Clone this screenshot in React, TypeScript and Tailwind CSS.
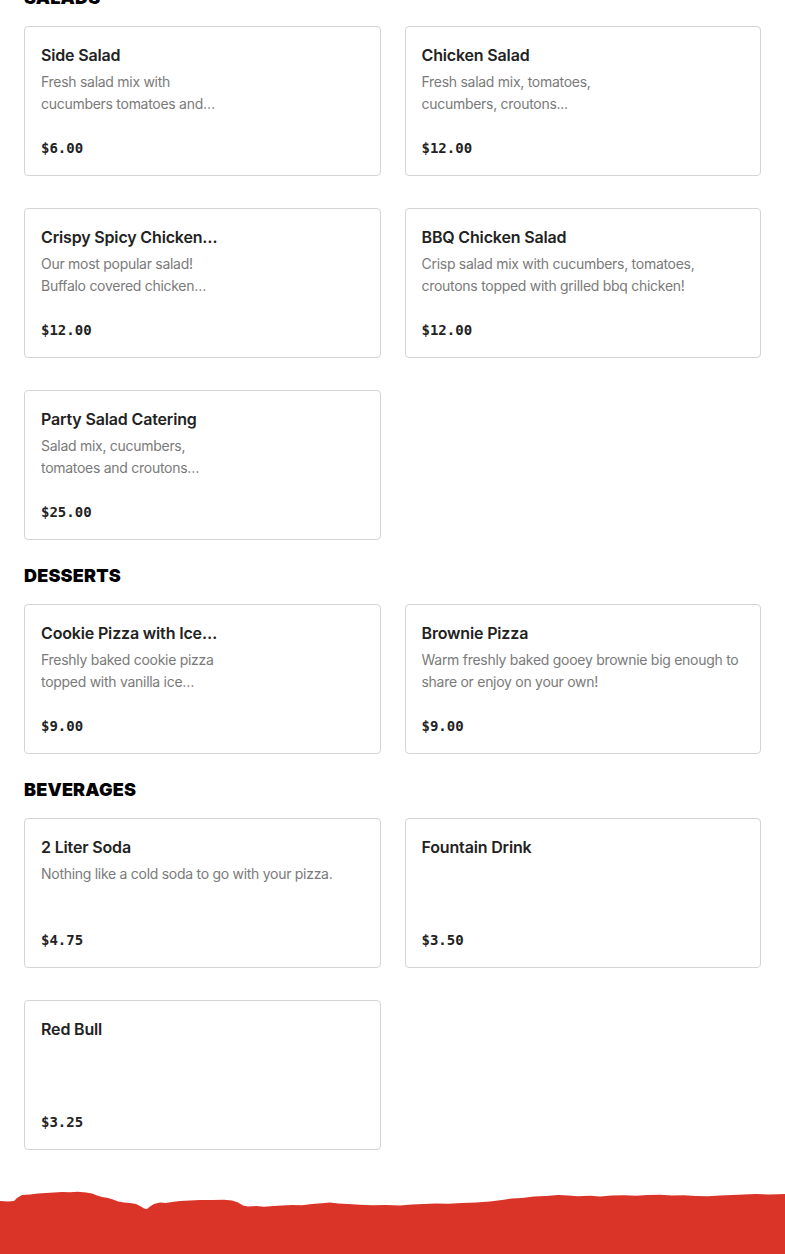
import React from 'react'

type Item = {
  name: string
  description?: string
  price: string
  hasImage?: boolean
}

type Section = {
  title: string
  items: Item[]
}

const MENU: Section[] = [
  {
    title: 'SALADS',
    items: [
      { name: 'Side Salad', description: 'Fresh salad mix with cucumbers tomatoes and croutons with your choice of dressing.', price: '$6.00', hasImage: true },
      { name: 'Chicken Salad', description: 'Fresh salad mix, tomatoes, cucumbers, croutons...', price: '$12.00', hasImage: true },
      { name: 'Crispy Spicy Chicken Salad', description: 'Our most popular salad! Buffalo covered chicken tenders on a bed of fresh salad mix.', price: '$12.00', hasImage: true },
      { name: 'BBQ Chicken Salad', description: 'Crisp salad mix with cucumbers, tomatoes, croutons topped with grilled bbq chicken!', price: '$12.00' },
      { name: 'Party Salad Catering', description: 'Salad mix, cucumbers, tomatoes and croutons served with dressings on the side.', price: '$25.00', hasImage: true },
    ],
  },
  {
    title: 'DESSERTS',
    items: [
      { name: 'Cookie Pizza with Ice Cream', description: 'Freshly baked cookie pizza topped with vanilla ice cream and chocolate drizzle.', price: '$9.00', hasImage: true },
      { name: 'Brownie Pizza', description: 'Warm freshly baked gooey brownie big enough to share or enjoy on your own!', price: '$9.00' },
    ],
  },
  {
    title: 'BEVERAGES',
    items: [
      { name: '2 Liter Soda', description: 'Nothing like a cold soda to go with your pizza.', price: '$4.75' },
      { name: 'Fountain Drink', price: '$3.50' },
      { name: 'Red Bull', price: '$3.25' },
    ],
  },
]

export default function App() {
  return (
    <div className="min-h-screen bg-white font-['Inter',sans-serif] overflow-hidden">
      <main className="px-6 -mt-[14px]">
        {MENU.map((section, i) => (
          <section key={section.title} className={i === 0 ? '' : 'mt-6'}>
            <h2 className="text-[18px] leading-6 font-black tracking-[0.01em] text-black mb-4">
              {section.title}
            </h2>
            <div className="grid grid-cols-2 gap-x-6 gap-y-8">
              {section.items.map((item) => (
                <MenuCard key={item.name} item={item} />
              ))}
            </div>
          </section>
        ))}
      </main>

      {/* Footer: torn paper edge */}
      <footer className="mt-10">
        <svg viewBox="0 0 785 64" preserveAspectRatio="none" className="block w-full h-[64px]">
          <path
            fill="#d93427"
            d="M0 11 L8 11.5 L14 11 L17 8 L22 5 L30 4.5 L38 3.5 L46 3 L54 2.5 L62 2 L70 2.2 L78 1.8 L86 2.5 L92 3.5 L97 5.5 L102 7 L108 8 L113 9.5 L118 11.5 L124 12.5 L130 13 L136 14 L140 16 L144 18.5 L147 19 L150 16.5 L154 14 L160 12.5 L166 13 L172 12 L180 11 L190 10.5 L200 10 L212 10 L224 9.8 L232 10.5 L238 12.5 L243 15.5 L248 16.5 L256 16 L264 16.8 L274 16 L282 15.5 L292 15 L302 15.2 L312 14 L322 13.2 L330 12.5 L338 13.5 L348 14 L360 14.8 L372 15.2 L386 15 L400 15.5 L412 14.5 L424 14 L436 13.5 L448 13.8 L462 13 L476 12.5 L490 11.5 L502 10 L512 8.5 L522 8 L534 6.5 L546 6 L558 5 L568 5.5 L578 6.2 L590 5.8 L600 6.5 L612 5.5 L624 5.2 L636 5.8 L648 5 L660 4.8 L672 5.5 L684 5.2 L696 6 L708 6.2 L720 5.5 L732 5 L744 4.6 L756 4 L768 4.5 L778 4.2 L785 4 L785 64 L0 64 Z"
          />
        </svg>
      </footer>
    </div>
  )
}

function MenuCard({ item }: { item: Item }) {
  const narrow = item.hasImage
  return (
    <div className="h-[150px] rounded border border-[#d4d4d4] bg-white px-4 pt-4 pb-[17px] flex flex-col">
      <div className={narrow ? 'w-[180px]' : 'w-full'}>
        <p className="text-[16px] leading-6 font-semibold tracking-[-0.01em] text-[#222] truncate">{item.name}</p>
        {item.description && (
          <p className="mt-1 text-[14px] leading-[22px] tracking-[-0.02em] text-[#7a7a7a] line-clamp-2">
            {item.description}
          </p>
        )}
      </div>
      <p className="mt-auto text-[14px] leading-5 font-bold text-[#222] font-['DejaVu_Sans_Mono',monospace]">
        {item.price}
      </p>
    </div>
  )
}
